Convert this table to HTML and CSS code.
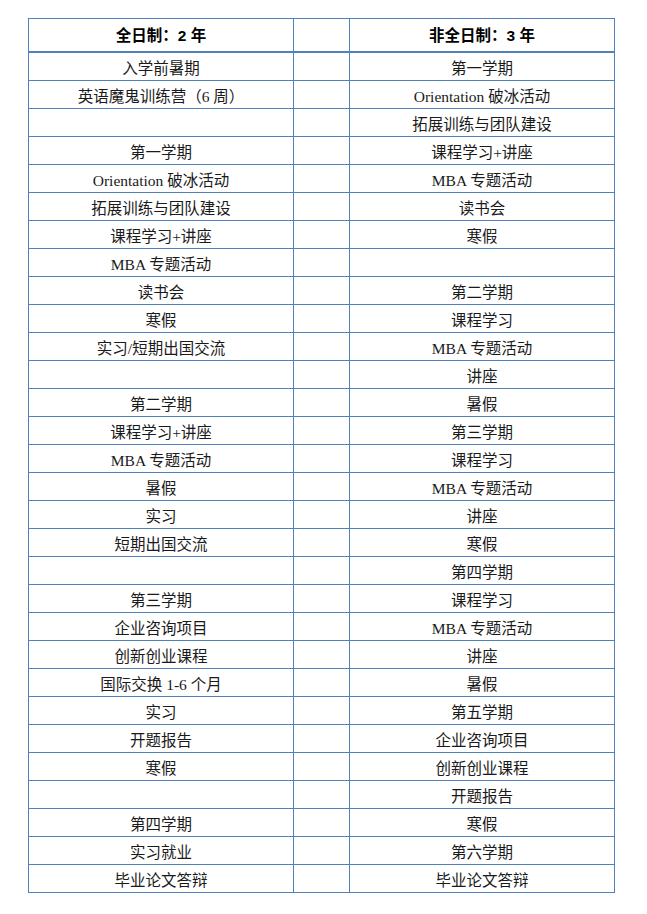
FILE: index.html
```html
<!DOCTYPE html>
<html lang="zh-CN">
<head>
<meta charset="utf-8">
<title>MBA 学制安排</title>
<link rel="stylesheet" href="styles.css">
</head>
<body>
<table class="plan">
<colgroup><col class="c-main"><col class="c-gap"><col class="c-main"></colgroup>
<thead>
<tr><th>全日制：2 年</th><th></th><th>非全日制：3 年</th></tr>
</thead>
<tbody>
<tr><td>入学前暑期</td><td></td><td>第一学期</td></tr>
<tr><td>英语魔鬼训练营（6 周）</td><td></td><td>Orientation 破冰活动</td></tr>
<tr><td></td><td></td><td>拓展训练与团队建设</td></tr>
<tr><td>第一学期</td><td></td><td>课程学习+讲座</td></tr>
<tr><td>Orientation 破冰活动</td><td></td><td>MBA 专题活动</td></tr>
<tr><td>拓展训练与团队建设</td><td></td><td>读书会</td></tr>
<tr><td>课程学习+讲座</td><td></td><td>寒假</td></tr>
<tr><td>MBA 专题活动</td><td></td><td></td></tr>
<tr><td>读书会</td><td></td><td>第二学期</td></tr>
<tr><td>寒假</td><td></td><td>课程学习</td></tr>
<tr><td>实习/短期出国交流</td><td></td><td>MBA 专题活动</td></tr>
<tr><td></td><td></td><td>讲座</td></tr>
<tr><td>第二学期</td><td></td><td>暑假</td></tr>
<tr><td>课程学习+讲座</td><td></td><td>第三学期</td></tr>
<tr><td>MBA 专题活动</td><td></td><td>课程学习</td></tr>
<tr><td>暑假</td><td></td><td>MBA 专题活动</td></tr>
<tr><td>实习</td><td></td><td>讲座</td></tr>
<tr><td>短期出国交流</td><td></td><td>寒假</td></tr>
<tr><td></td><td></td><td>第四学期</td></tr>
<tr><td>第三学期</td><td></td><td>课程学习</td></tr>
<tr><td>企业咨询项目</td><td></td><td>MBA 专题活动</td></tr>
<tr><td>创新创业课程</td><td></td><td>讲座</td></tr>
<tr><td>国际交换 1-6 个月</td><td></td><td>暑假</td></tr>
<tr><td>实习</td><td></td><td>第五学期</td></tr>
<tr><td>开题报告</td><td></td><td>企业咨询项目</td></tr>
<tr><td>寒假</td><td></td><td>创新创业课程</td></tr>
<tr><td></td><td></td><td>开题报告</td></tr>
<tr><td>第四学期</td><td></td><td>寒假</td></tr>
<tr><td>实习就业</td><td></td><td>第六学期</td></tr>
<tr><td>毕业论文答辩</td><td></td><td>毕业论文答辩</td></tr>
</tbody>
</table>
</body>
</html>
```
FILE: styles.css
```css
html, body {
  margin: 0;
  padding: 0;
  background: #ffffff;
}
body {
  padding: 18px 0 0 28px;
}
.plan {
  border-collapse: collapse;
  table-layout: fixed;
  width: 587px;
  font-family: "Liberation Serif", "Noto Sans CJK SC", serif;
  font-size: 15.5px;
  color: #1a1a1a;
}
.c-main { width: 265px; }
.c-gap { width: 56px; }
.plan th,
.plan td {
  border: 1px solid #4f81bd;
  padding: 5px 0 0 0;
  text-align: center;
  vertical-align: middle;
  white-space: nowrap;
  line-height: 20px;
}
.plan th {
  height: 30px;
  font-family: "Liberation Sans", "Noto Sans CJK SC", sans-serif;
  font-weight: bold;
  color: #000;
  border-bottom: 2px solid #4f81bd;
  padding-top: 2px;
}
.plan td {
  height: 22px;
}
```
